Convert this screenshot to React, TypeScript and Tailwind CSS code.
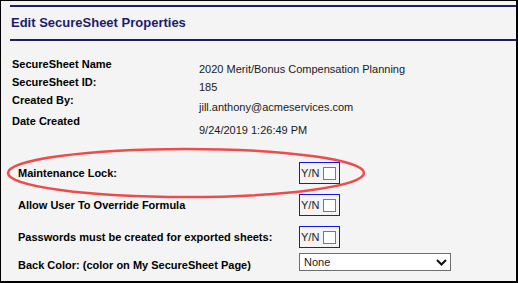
export default function App() {
   const info = [
      { label: "SecureSheet Name", value: "2020 Merit/Bonus Compensation Planning", h: "h-[18px]", pt: "pt-[5px]" },
      { label: "SecureSheet ID:", value: "185", h: "h-[18px]", pt: "pt-[5px]" },
      { label: "Created By:", value: "jill.anthony@acmeservices.com", h: "h-[21px]", pt: "pt-[7px]" },
      { label: "Date Created", value: "9/24/2019 1:26:49 PM", h: "h-[22px]", pt: "pt-[9px]" },
   ];

   const toggles = [
      "Maintenance Lock:",
      "Allow User To Override Formula",
      "Passwords must be created for exported sheets:",
   ];

   return (
      <div className="relative w-[518px] h-[283px] overflow-hidden bg-[#f4f4f4] border-t border-l border-r-2 border-b-2 border-black font-['Liberation_Sans',Arial,sans-serif] text-black">
         {/* header */}
         <div className="mt-[4px] ml-[9px] h-[2px] bg-[#1e1e6e]"></div>
         <div className="h-[32px] flex items-center pl-[10px]">
            <h1 className="text-[13px] font-bold text-[#1c1c6b]">Edit SecureSheet Properties</h1>
         </div>
         <div className="ml-[9px] h-[2px] bg-[#1e1e6e]"></div>

         {/* read-only info */}
         <div className="mt-[17px] pl-[11px] flex flex-col">
            {info.map((row) => (
               <div key={row.label} className={`flex ${row.h}`}>
                  <div className="w-[187px] text-[11px] leading-[13px] font-bold">{row.label}</div>
                  <div className={`${row.pt} text-[11px] leading-[13px] text-[#1a1a1a]`}>{row.value}</div>
               </div>
            ))}
         </div>

         {/* editable props */}
         <div className="mt-[25px] pl-[17px] flex flex-col gap-[10px]">
            {toggles.map((label) => (
               <div key={label} className="flex items-center h-[22px]">
                  <div className="w-[281px] text-[11px] font-bold">{label}</div>
                  <div className="h-[22px] w-[41px] border border-[#1414f0] flex items-center pl-[1px]">
                     <span className="text-[11px] text-[#222]">Y/N</span>
                     <span className="ml-[4px] w-[13px] h-[13px] bg-white border border-[#7a7a7a]"></span>
                  </div>
               </div>
            ))}
            <div className="flex items-start mt-[1px]">
               <div className="w-[281px] text-[11px] leading-[13px] font-bold">Back Color: (color on My SecureSheet Page)</div>
               <div className="mt-[-6px] w-[152px] h-[18px] bg-white border border-[#6e6e6e] flex items-center justify-between pl-[4px] pr-[3px]">
                  <span className="text-[11px] text-[#1a1a1a]">None</span>
                  <svg width="11" height="7" viewBox="0 0 11 7">
                     <polyline points="1,1 5.5,5.5 10,1" fill="none" stroke="#111" strokeWidth="2" />
                  </svg>
               </div>
            </div>
         </div>

         {/* annotation circle */}
         <svg className="absolute left-0 top-0 pointer-events-none" width="518" height="283" viewBox="0 0 518 283">
            <ellipse cx="185" cy="172" rx="178" ry="24" fill="none" stroke="#f04a4a" strokeWidth="2.5" />
         </svg>
      </div>
   );
}
